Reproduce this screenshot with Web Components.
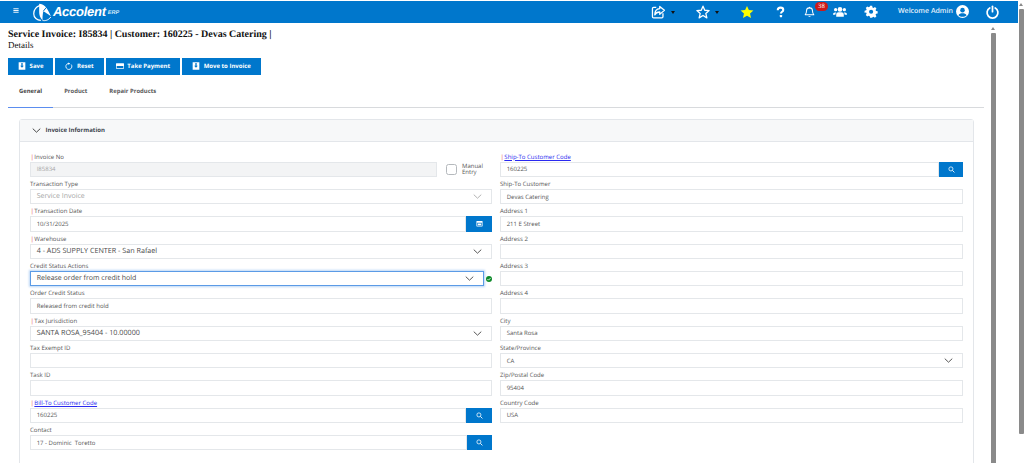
<!DOCTYPE html>
<html lang="en"><head><meta charset="utf-8"><title>Service Invoice</title>
<style>
html,body{margin:0;height:463px;overflow:hidden;background:#fff;font-family:"Open Sans","Liberation Sans",sans-serif;text-rendering:geometricPrecision}
body{display:flex}
</style></head><body>
<app-main>
  <app-header slot="top"></app-header>
  <page-title>
    <span slot="title">Service Invoice: I85834 | Customer: 160225 - Devas Catering |</span>
    <span slot="sub">Details</span>
  </page-title>
  <action-bar>
    <action-button icon="save">Save</action-button>
    <action-button icon="reset">Reset</action-button>
    <action-button icon="card">Take Payment</action-button>
    <action-button icon="save">Move to Invoice</action-button>
  </action-bar>
  <tab-bar>
    <tab-item active>General</tab-item>
    <tab-item>Product</tab-item>
    <tab-item>Repair Products</tab-item>
  </tab-bar>
  <form-card heading="Invoice Information">
    <form-field label="Invoice No" req value="I85834" muted gray aside-w="55"><check-box slot="aside">Manual<br>Entry</check-box></form-field>
    <form-field label="Ship-To Customer Code" req link value="160225" btn="search" btn-w="24"></form-field>
    <form-field label="Transaction Type" value="Service Invoice" select muted big style="--vs:7px"></form-field>
    <form-field label="Ship-To Customer" value="Devas Catering"></form-field>
    <form-field label="Transaction Date" req value="10/31/2025" btn="calendar" btn-w="26"></form-field>
    <form-field label="Address 1" value="211 E Street"></form-field>
    <form-field label="Warehouse" req value="4 - ADS SUPPLY CENTER - San Rafael" select big dark></form-field>
    <form-field label="Address 2"></form-field>
    <form-field label="Credit Status Actions" value="Release order from credit hold" select big dark focus aside-w="8" style="--vs:7px"><status-dot slot="aside"></status-dot></form-field>
    <form-field label="Address 3"></form-field>
    <form-field label="Order Credit Status" value="Released from credit hold"></form-field>
    <form-field label="Address 4"></form-field>
    <form-field label="Tax Jurisdiction" req value="SANTA ROSA_95404 - 10.00000" select big dark></form-field>
    <form-field label="City" value="Santa Rosa"></form-field>
    <form-field label="Tax Exempt ID"></form-field>
    <form-field label="State/Province" value="CA" select></form-field>
    <form-field label="Task ID"></form-field>
    <form-field label="Zip/Postal Code" value="95404"></form-field>
    <form-field label="Bill-To Customer Code" req link value="160225" btn="search" btn-w="26"></form-field>
    <form-field label="Country Code" value="USA"></form-field>
    <form-field label="Contact" value="17 - Dominic  Toretto" btn="search" btn-w="25"></form-field>
  </form-card>
</app-main>
<fake-scroll class="outer"></fake-scroll>
<script>
const ICONS={
 menu:'<path d="M3 6h18M3 12h18M3 18h18" stroke="currentColor" stroke-width="3.2" fill="none"/>',
 share:'<path d="M9 4H4.5A2 2 0 0 0 2.5 6v14a2 2 0 0 0 2 2h14a2 2 0 0 0 2-2v-6" fill="none" stroke="currentColor" stroke-width="2.2"/><path d="M15 2.5l8 6.7-8 6.8v-4c-4.500 0-7 1.500-8.500 5 0-6 3-10.500 8.500-10.800z" fill="none" stroke="currentColor" stroke-width="2.200" stroke-linejoin="round"/>',
 star:'<polygon points="12,2 15,9 22.500,9.600 16.800,14.500 18.600,22 12,18 5.400,22 7.200,14.500 1.500,9.600 9,9" fill="none" stroke="currentColor" stroke-width="2.200" stroke-linejoin="round"/>',
 starfill:'<polygon points="12,1.500 15.200,8.600 23,9.400 17.200,14.600 18.900,22.300 12,18.300 5.100,22.300 6.800,14.600 1,9.400 8.800,8.600" fill="currentColor"/>',
 help:'<path d="M6 8c0-3.500 2.700-5.500 6.200-5.500 3.300 0 5.800 2 5.800 4.900 0 4.300-5 4-5 8.100" fill="none" stroke="currentColor" stroke-width="4.500"/><rect x="10.500" y="18.500" width="5" height="5" rx="1" fill="currentColor"/>',
 bell:'<path d="M12 3a6.500 6.500 0 0 0-6.500 6.500c0 5-1 6.500-3 8.500h19c-2-2-3-3.500-3-8.500A6.500 6.500 0 0 0 12 3z" fill="none" stroke="currentColor" stroke-width="2.200" stroke-linejoin="round"/><path d="M9.500 20.500a2.600 2.600 0 0 0 5 0z" fill="currentColor"/><circle cx="12" cy="2.200" r="1.500" fill="currentColor"/>',
 users:'<g fill="currentColor"><circle cx="12" cy="7.500" r="4"/><circle cx="4.500" cy="8" r="2.800"/><circle cx="19.500" cy="8" r="2.800"/><path d="M5.500 20v-3.500c0-2.500 2-4 4-4h5c2 0 4 1.500 4 4V20z"/><path d="M0 16.500c0-2.300 1.300-3.800 3.500-3.800h2c-1 1-1.500 2.300-1.500 3.800H0zM24 16.500c0-2.300-1.300-3.800-3.500-3.800h-2c1 1 1.500 2.300 1.500 3.800H24z"/></g>',
 gear:'<path fill-rule="evenodd" fill="currentColor" d="M10 1h4l.7 3.100 2 .9 2.700-1.700 2.900 2.900-1.700 2.700.9 2 3.100.7v4l-3.100.7-.9 2 1.700 2.700-2.900 2.900-2.700-1.700-2 .9L14 24h-4l-.7-3.100-2-.9-2.700 1.700-2.900-2.900 1.700-2.700-.9-2L-.6 14.400v-4l3.100-.7.900-2-1.700-2.700 2.900-2.900 2.700 1.700 2-.9zM12 8.500a4 4 0 1 0 0 8 4 4 0 0 0 0-8z" transform="translate(1.500 .5) scale(.89)"/>',
 user:'<circle cx="12" cy="12" r="12" fill="currentColor"/><circle cx="12" cy="9.500" r="4.200" fill="#0077cc"/><path d="M4.500 19c1.500-2.800 4-3.800 7.500-3.800s6 1 7.500 3.800c-2 2-4.500 2.800-7.500 2.800s-5.500-.8-7.500-2.800z" fill="#0077cc"/>',
 power:'<path d="M7 4.500a10 10 0 1 0 10 0" fill="none" stroke="currentColor" stroke-width="3.200" stroke-linecap="round"/><path d="M12 1.500v10" stroke="currentColor" stroke-width="3.200" stroke-linecap="round"/>',
 save:'<path fill-rule="evenodd" fill="currentColor" d="M2 1h20v22H2zM10 3v8H6.500l5.500 6 5.500-6H14V3z"/>',
 reset:'<path d="M18.500 7.500a9 9 0 1 1-5-3" fill="none" stroke="currentColor" stroke-width="2.600"/><path d="M9 1.500l6 3-4.500 4.500z" fill="currentColor"/>',
 card:'<path fill="currentColor" fill-rule="evenodd" d="M1 4h22a1 1 0 0 1 1 1v14a1 1 0 0 1-1 1H1a1 1 0 0 1-1-1V5a1 1 0 0 1 1-1zM2 12v6h20v-6z"/>',
 search:'<circle cx="10" cy="10" r="7" fill="none" stroke="currentColor" stroke-width="2.600"/><path d="M15.200 15.200L22 22" stroke="currentColor" stroke-width="3"/>',
 calendar:'<path fill="currentColor" fill-rule="evenodd" d="M3 3h18a1.500 1.500 0 0 1 1.500 1.500v16A1.500 1.500 0 0 1 21 22H3a1.500 1.500 0 0 1-1.500-1.500v-16A1.500 1.500 0 0 1 3 3zM4 9.500V19.500h16V9.500z"/><rect x="6" y="12" width="12" height="6" fill="currentColor"/>',
 chevron:'<path d="M2 7l10 9.500L22 7" fill="none" stroke="currentColor" stroke-width="2.400"/>',
 check:'<circle cx="12" cy="12" r="12" fill="currentColor"/><path d="M6 12.500l4 4 8-8" fill="none" stroke="#fff" stroke-width="3.500"/>'
};
function el(name,css,html){
 customElements.define(name,class extends HTMLElement{
  connectedCallback(){
   if(this.shadowRoot)return;
   const r=this.attachShadow({mode:'open'});
   r.innerHTML='<style>'+css+'</style>'+(typeof html==='function'?html(this):html);
  }
 });
}
const a=(e,n,d='')=>e.hasAttribute(n)?e.getAttribute(n):d;
el('ui-icon',':host{display:inline-flex;line-height:0;flex:none}svg{display:block;width:100%;height:100%;overflow:visible}',
 e=>`<svg viewBox="0 0 24 24" aria-hidden="true">${ICONS[a(e,'name')]||''}</svg>`);
el('app-main',':host{display:flex;flex-direction:column;width:1018px;height:463px;flex:none}.row{display:flex;flex:1;min-height:0}.page{width:976px;padding:0 6px 0 8px;flex:none;overflow:hidden}',
 ()=>'<slot name="top"></slot><div class="row"><div class="page"><slot></slot></div><fake-scroll class="inner"></fake-scroll></div>');
el('app-header',`:host{display:flex;align-items:center;height:21.500px;margin-top:1px;background:#0077cc;color:#fff;flex:none}
.burger{width:8px;height:7px;margin:-2px 0 0 12px}
.logo{display:flex;align-items:center;margin-left:12px;height:21px}
.mark{width:21px;height:20px}
.name{font:italic 700 13px/1 "Liberation Sans",sans-serif;letter-spacing:-.27px;color:#fff}
.erp{font:italic 700 5.500px/1 "Liberation Sans",sans-serif;margin:4px 0 0 2px;color:#d8ebfa}
.tools{margin-left:auto;display:flex;align-items:center;padding-right:19px;height:21px}
.caret{width:0;height:0;border:2px solid transparent;border-top:3px solid #111;border-bottom:0;margin-left:5px;margin-top:2px}
.b{position:relative;display:flex}
.badge{position:absolute;left:11px;top:-2.500px;width:13px;height:9px;border-radius:5px;background:#cc1a1a;color:#fff;font:500 6px/9px "Open Sans",sans-serif;text-align:center}
.w{font:600 7px/1 "Open Sans",sans-serif;margin-left:20px;white-space:nowrap;width:58px;color:#e6f2fb}`,
 ()=>`<ui-icon class="burger" name="menu"></ui-icon>
 <div class="logo"><svg class="mark" viewBox="0 0 24 24" aria-hidden="true"><path d="M9 4C4 6 1.500 10 1.500 14c0 5 4 8 8.500 8" fill="none" stroke="#fff" stroke-width="1.500"/><path d="M22 18c-3 4-7 5-10 4" fill="none" stroke="#fff" stroke-width="1.200"/><path d="M8 2c3 0 5 1 7 3 3 3 5 7 7 12-4-3-7-5-9-6-1 4-1 8-1 11-3-3-4-7-4-10 0-4 0-7 0-10z" fill="#fff"/><path d="M13 11c3-4 5-6 7-7" stroke="#0077cc" stroke-width="1.200" fill="none"/></svg><span class="name">Accolent</span><span class="erp">ERP</span></div>
 <div class="tools">
 <ui-icon name="share" style="width:14px;height:14px"></ui-icon><i class="caret" style="margin-left:6px"></i>
 <ui-icon name="star" style="width:14px;height:14px;margin-left:21px"></ui-icon><i class="caret"></i>
 <ui-icon name="starfill" style="width:14px;height:14px;margin-left:21px;color:#ffff00"></ui-icon>
 <ui-icon name="help" style="width:11px;height:14px;margin-left:21px"></ui-icon>
 <span class="b" style="margin-left:18px"><ui-icon name="bell" style="width:11px;height:14px"></ui-icon><span class="badge">38</span></span>
 <ui-icon name="users" style="width:16px;height:14px;margin-left:17px"></ui-icon>
 <ui-icon name="gear" style="width:14px;height:14px;margin-left:16px"></ui-icon>
 <span class="w">Welcome Admin</span>
 <ui-icon name="user" style="width:13px;height:13px"></ui-icon>
 <ui-icon name="power" style="width:13px;height:14px;margin-left:17px"></ui-icon>
 </div>`);
el('page-title',`:host{display:block;padding-top:5.500px;font-family:"Liberation Serif",serif;color:#111}
.t{font-weight:700;font-size:10px;line-height:13px;white-space:nowrap}.s{font-size:9px;line-height:9.500px}`,
 ()=>'<div class="t"><slot name="title"></slot></div><div class="s"><slot name="sub"></slot></div>');
el('action-bar',':host{display:flex;gap:2px;margin-top:7px}','<slot></slot>');
el('action-button',`:host{display:flex;align-items:center;gap:3.600px;height:17px;padding:0 10px;background:#0077cc;color:#fff;font:700 6px/1 "Open Sans",sans-serif;white-space:nowrap}
ui-icon{width:8px;height:8px}`,e=>`<ui-icon name="${a(e,'icon')}"></ui-icon><slot></slot>`);
el('tab-bar',':host{display:flex;height:32px;border-bottom:1px solid #d8dadd}','<slot></slot>');
el('tab-item',`:host{display:flex;align-items:center;justify-content:center;height:33px;padding:3px 11px 0;border-bottom:1px solid transparent;font:700 5.900px/1 "Open Sans",sans-serif;color:#5a5a5a;box-sizing:border-box;white-space:nowrap}
:host([active]){border-bottom-color:#5b8def;color:#444}`,'<slot></slot>');
el('form-card',`:host{display:block;margin:11.500px 10px 0 11px;border:1px solid #e3e6ea;border-radius:3px 3px 0 0;height:360px;box-sizing:border-box}
.h{display:flex;align-items:center;height:20.500px;background:#f7f8f9;border-bottom:1px solid #e3e6ea;padding-left:12px;font:700 6px/1 "Open Sans",sans-serif;color:#3f4650}
.h ui-icon{width:9px;height:9px;margin-right:4.500px;color:#333}
.b{display:grid;grid-template-columns:462px 463px;column-gap:8px;grid-auto-rows:27.350px;padding:8px 0 0 10px}`,
 e=>`<div class="h"><ui-icon name="chevron"></ui-icon>${a(e,'heading')}</div><div class="b"><slot></slot></div>`);
el('form-field',`:host{display:block;min-width:0}
.l{height:12px;font:400 6.050px/14px "Open Sans",sans-serif;color:#555;white-space:nowrap}
.r{color:#e04848;margin:0 .5px 0 .5px}.l a{color:#2a2af0;text-decoration:underline}
.row{display:flex;height:15.350px;align-items:stretch}
.c{flex:1;min-width:0;display:flex;align-items:center;background:#fff;border:1px solid #e4e7ea;box-sizing:border-box;padding-left:5.700px;font:400 6px/1 "Open Sans",sans-serif;color:#555;white-space:pre}
:host([big]) .c{font-size:var(--vs,7.200px)}
:host([dark]) .c{color:#4a4a4a}
:host([muted]) .c{color:#a6a6a6}
:host([gray]) .c{background:#f3f4f5}
:host([focus]) .c{border-color:#5b9be6;box-shadow:0 0 2px 1px #bcd7f5}
.ch{width:9px;height:9px;margin-left:auto;margin-right:9px;color:#444}
:host([muted]) .ch{color:#aaa}
.bt{flex:none;display:flex;align-items:center;justify-content:center;background:#0077cc;color:#fff}
.bt ui-icon{width:7px;height:7px}
.as{flex:none;display:flex;align-items:center}`,
 e=>{
  const lbl=a(e,'label');
  const t=e.hasAttribute('link')?`<a href="#">${lbl}</a>`:lbl;
  const asideW=a(e,'aside-w');
  return `<div class="l">${e.hasAttribute('req')?'<span class="r">|</span>':''}${t}</div>
  <div class="row"><div class="c"><span>${a(e,'value')}</span>${e.hasAttribute('select')?'<ui-icon class="ch" name="chevron"></ui-icon>':''}</div>
  ${e.hasAttribute('btn')?`<div class="bt" style="width:${a(e,'btn-w')}px"><ui-icon name="${a(e,'btn')}"></ui-icon></div>`:''}
  ${asideW?`<div class="as" style="width:${asideW}px"><slot name="aside"></slot></div>`:''}</div>`;
 });
el('check-box',`:host{display:flex;align-items:center;margin-left:9px;gap:5px;font:400 6px/6.500px "Open Sans",sans-serif;color:#555}
i{display:block;width:11px;height:11px;border:1px solid #b5b9bd;border-radius:2.500px;box-sizing:border-box}`,'<i></i><span><slot></slot></span>');
el('status-dot',':host{display:block;margin-left:2px;width:6px;height:6px;color:#0d8a2a}ui-icon{width:6px;height:6px;display:block}','<ui-icon name="check"></ui-icon>');
el('fake-scroll',`:host{display:block;position:relative;flex:none;width:6px;height:100%;background:#fff}
.u{width:0;height:0;border:2.500px solid transparent;border-top:0;border-bottom:3px solid #8a8a8a;margin:0 auto}
.t{background:#8a8a8a;width:5px;margin:0 auto;border-radius:1px}
:host(.outer) .u{margin-top:3px}:host(.outer) .t{margin-top:3px;height:425px}
:host(.inner) .u{margin-top:4px}:host(.inner) .t{margin-top:3px;height:440px}`,'<div class="u"></div><div class="t"></div>');
</script>
</body></html>
